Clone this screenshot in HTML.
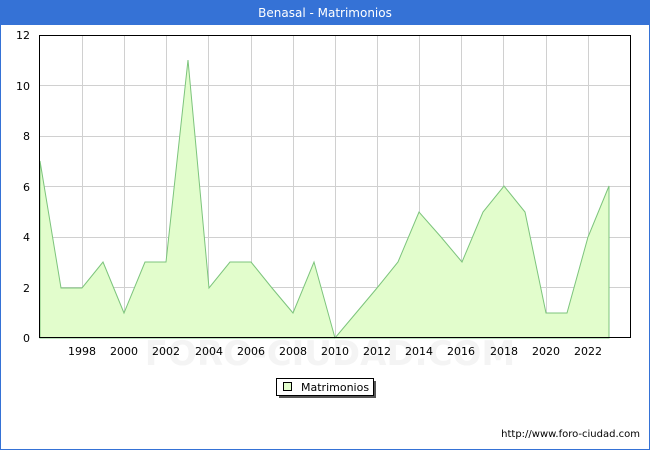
<!DOCTYPE html>
<html><head><meta charset="utf-8"><style>
body{margin:0;width:650px;height:450px;overflow:hidden;font-family:"DejaVu Sans","Liberation Sans",sans-serif;}
</style></head><body>
<svg width="650" height="450" xmlns="http://www.w3.org/2000/svg" font-family="DejaVu Sans, Liberation Sans, sans-serif">
<rect x="0" y="0" width="650" height="450" fill="#fff"/>
<rect x="0.5" y="0.5" width="649" height="449" fill="none" stroke="#3572d6"/>
<rect x="0" y="0" width="650" height="25" fill="#3572d6"/>
<text x="325" y="17" text-anchor="middle" font-size="12" fill="#fff">Benasal - Matrimonios</text>
<g stroke="#d0d0d0" stroke-width="1">
<line x1="40" y1="287.5" x2="630" y2="287.5"/><line x1="40" y1="237.5" x2="630" y2="237.5"/><line x1="40" y1="186.5" x2="630" y2="186.5"/><line x1="40" y1="136.5" x2="630" y2="136.5"/><line x1="40" y1="85.5" x2="630" y2="85.5"/>
<line x1="82.5" y1="35" x2="82.5" y2="338"/><line x1="124.5" y1="35" x2="124.5" y2="338"/><line x1="166.5" y1="35" x2="166.5" y2="338"/><line x1="208.5" y1="35" x2="208.5" y2="338"/><line x1="251.5" y1="35" x2="251.5" y2="338"/><line x1="293.5" y1="35" x2="293.5" y2="338"/><line x1="335.5" y1="35" x2="335.5" y2="338"/><line x1="377.5" y1="35" x2="377.5" y2="338"/><line x1="419.5" y1="35" x2="419.5" y2="338"/><line x1="461.5" y1="35" x2="461.5" y2="338"/><line x1="503.5" y1="35" x2="503.5" y2="338"/><line x1="546.5" y1="35" x2="546.5" y2="338"/><line x1="588.5" y1="35" x2="588.5" y2="338"/>
</g>
<text x="330" y="365" text-anchor="middle" font-size="34" font-weight="bold" fill="#f4f4f4">FORO-CIUDAD.COM</text>
<polygon fill="#e2fdcc" stroke="#7cc47c" stroke-width="1" points="40,338 40,161 61,288 82,288 103,262 124,313 145,262 166,262 188,60 209,288 230,262 251,262 272,288 293,313 314,262 335,338 356,313 377,288 398,262 419,212 441,237 462,262 483,212 504,186 525,212 546,313 567,313 588,237 609,186 609,338"/>
<rect x="39.5" y="35.5" width="591" height="302" fill="none" stroke="#000"/>
<g font-size="11" fill="#000" text-anchor="end">
<text x="30" y="342">0</text><text x="30" y="292">2</text><text x="30" y="241">4</text><text x="30" y="191">6</text><text x="30" y="140">8</text><text x="30" y="90">10</text><text x="30" y="39">12</text>
</g>
<g font-size="11" fill="#000" text-anchor="middle">
<text x="82" y="355">1998</text><text x="124" y="355">2000</text><text x="166" y="355">2002</text><text x="209" y="355">2004</text><text x="251" y="355">2006</text><text x="293" y="355">2008</text><text x="335" y="355">2010</text><text x="377" y="355">2012</text><text x="419" y="355">2014</text><text x="461" y="355">2016</text><text x="504" y="355">2018</text><text x="546" y="355">2020</text><text x="588" y="355">2022</text>
</g>
<rect x="279" y="381" width="97" height="17" fill="#555"/>
<rect x="276.5" y="378.5" width="97" height="17" fill="#fff" stroke="#000"/>
<rect x="283.5" y="382.5" width="8" height="8" fill="#e2fdcc" stroke="#000"/>
<text x="301" y="391" font-size="11">Matrimonios</text>
<text x="640" y="437" text-anchor="end" font-size="10">http://www.foro-ciudad.com</text>
</svg>
</body></html>
